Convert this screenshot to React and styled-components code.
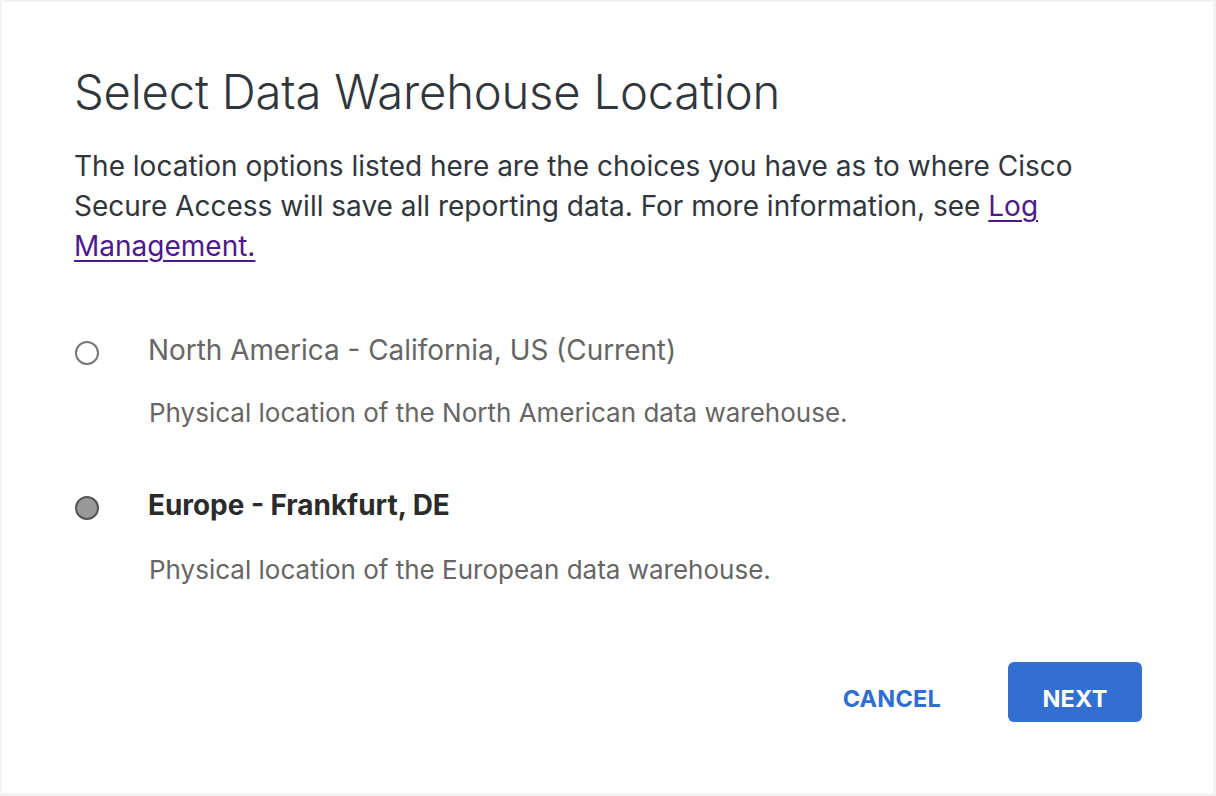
import React, { useState } from "react";
import styled, { createGlobalStyle } from "styled-components";

const GlobalStyle = createGlobalStyle`
  html, body {
    margin: 0;
    padding: 0;
    background: #f3f3f3;
    font-family: Inter, "Noto Sans", sans-serif;
  }
`;

const Page = styled.div`
  width: 1216px;
  height: 796px;
  padding: 2px 3px 3px 2px;
  box-sizing: border-box;
  display: flex;
`;

const Card = styled.div`
  flex: 1;
  background: #ffffff;
  padding: 60px 71px 0 72px;
  display: flex;
  flex-direction: column;
`;

const Title = styled.h1`
  margin: 0;
  font-size: 47.2px;
  font-weight: 300;
  color: #31363d;
  line-height: 60px;
  letter-spacing: -0.2px;
`;

const Intro = styled.p`
  margin: 24px 0 0;
  font-size: 28px;
  line-height: 40px;
  color: #31363d;
  font-weight: 400;
`;

const Link = styled.a`
  color: #4d1a8c;
  text-decoration: underline;
  text-underline-offset: 4px;
  text-decoration-thickness: 2px;
`;

const Options = styled.div`
  margin-top: 68px;
  display: flex;
  flex-direction: column;
  gap: 60px;
`;

const Option = styled.label`
  display: grid;
  grid-template-columns: 74px 1fr;
  row-gap: ${({ $gap }) => $gap}px;
  align-items: center;
  cursor: pointer;
`;

const Radio = styled.span`
  width: 24px;
  height: 24px;
  box-sizing: border-box;
  border-radius: 50%;
  border: 2px solid ${({ $checked }) => ($checked ? "#555" : "#777")};
  background: ${({ $checked }) => ($checked ? "#999" : "#fff")};
  margin: 6px 0 0 1px;
`;

const OptionLabel = styled.span`
  font-size: 27.9px;
  line-height: 32px;
  color: ${({ $checked }) => ($checked ? "#2b2b2b" : "#666")};
  font-weight: ${({ $checked }) => ($checked ? 700 : 400)};
`;

const OptionDesc = styled.span`
  grid-column: 2;
  font-size: 26px;
  line-height: 32px;
  color: #666;
  padding-left: 1px;
`;

const Footer = styled.div`
  margin-top: 76px;
  display: flex;
  justify-content: flex-end;
  align-items: center;
  gap: 67px;
`;

const TextButton = styled.button`
  height: 60px;
  border: none;
  background: none;
  padding: 12px 0 0;
  font-family: Inter, sans-serif;
  font-size: 23.5px;
  font-weight: 700;
  color: #2f6fd2;
  letter-spacing: 0.2px;
  cursor: pointer;
`;

const PrimaryButton = styled.button`
  width: 134px;
  height: 60px;
  border: none;
  border-radius: 6px;
  background: #336fd1;
  color: #fff;
  font-family: Inter, sans-serif;
  font-size: 23.5px;
  font-weight: 700;
  letter-spacing: 0.2px;
  cursor: pointer;
  padding: 12px 0 0;
`;

const options = [
  {
    id: "na",
    label: "North America - California, US (Current)",
    desc: "Physical location of the North American data warehouse.",
    gap: 31,
  },
  {
    id: "eu",
    label: "Europe - Frankfurt, DE",
    desc: "Physical location of the European data warehouse.",
    gap: 33,
  },
];

export default function App() {
  const [selected, setSelected] = useState("eu");
  return (
    <>
      <GlobalStyle />
      <Page>
        <Card>
          <Title>Select Data Warehouse Location</Title>
          <Intro>
            The location options listed here are the choices you have as to where Cisco
            Secure Access will save all reporting data. For more information, see{" "}
            <Link href="#">Log Management.</Link>
          </Intro>
          <Options>
            {options.map((o) => {
              const checked = selected === o.id;
              return (
                <Option key={o.id} $gap={o.gap} onClick={() => setSelected(o.id)}>
                  <Radio $checked={checked} />
                  <OptionLabel $checked={checked}>{o.label}</OptionLabel>
                  <OptionDesc>{o.desc}</OptionDesc>
                </Option>
              );
            })}
          </Options>
          <Footer>
            <TextButton>CANCEL</TextButton>
            <PrimaryButton>NEXT</PrimaryButton>
          </Footer>
        </Card>
      </Page>
    </>
  );
}
